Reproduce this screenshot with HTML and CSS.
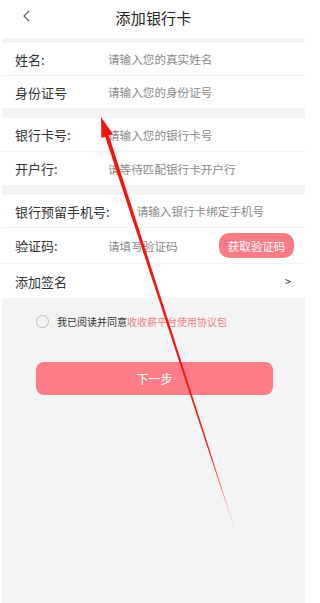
FILE: index.html
```html
<!DOCTYPE html>
<html lang="zh-CN">
<head>
<meta charset="utf-8">
<title>添加银行卡</title>
<link rel="stylesheet" href="styles.css">
</head>
<body>
<div class="page">
  <header class="topbar">
    <svg class="back" width="10" height="12" viewBox="0 0 10 12"><polyline points="7,1 2,6 7,11" fill="none" stroke="#555" stroke-width="1.1"/></svg>
    <h1 class="title">添加银行卡</h1>
  </header>
  <div class="gap gap-sm"></div>
  <section class="group">
    <div class="row"><span class="label">姓名:</span><span class="ph">请输入您的真实姓名</span></div>
    <div class="row"><span class="label">身份证号</span><span class="ph">请输入您的身份证号</span></div>
  </section>
  <div class="gap"></div>
  <section class="group">
    <div class="row r-tall"><span class="label">银行卡号:</span><span class="ph">请输入您的银行卡号</span></div>
    <div class="row r-tall"><span class="label">开户行:</span><span class="ph">请等待匹配银行卡开户行</span></div>
  </section>
  <div class="gap"></div>
  <section class="group">
    <div class="row"><span class="label wide">银行预留手机号:</span><span class="ph">请输入银行卡绑定手机号</span></div>
    <div class="row r-code"><span class="label">验证码:</span><span class="ph grow">请填写验证码</span><span class="code-btn">获取验证码</span></div>
    <div class="row r-sign"><span class="label grow">添加签名</span><span class="more">&gt;</span></div>
  </section>
  <div class="agree">
    <span class="radio"></span>
    <span class="agree-text">我已阅读并同意<span class="link">收收薪平台使用协议包</span></span>
  </div>
  <div class="next-wrap"><div class="next">下一步</div></div>
</div>
<svg class="arrow" width="308" height="603" viewBox="0 0 308 603">
  <defs>
    <linearGradient id="fade" gradientUnits="userSpaceOnUse" x1="107" y1="136" x2="236" y2="533">
      <stop offset="0" stop-color="#f2140f"/>
      <stop offset="0.78" stop-color="#f51a14"/>
      <stop offset="1" stop-color="#ff3a30" stop-opacity="0"/>
    </linearGradient>
  </defs>
  <polygon points="108.9,135.4 105.1,136.6 235.6,533 236.2,532.8" fill="url(#fade)"/>
  <polygon points="101,117 113,134.2 101.4,137.9" fill="#f2140f"/>
</svg>
</body>
</html>
```
FILE: styles.css
```css
html, body {
  margin: 0;
  padding: 0;
  background: #ffffff;
}
body {
  width: 308px;
  height: 603px;
  overflow: hidden;
  position: relative;
  font-family: "Noto Sans CJK SC", "Noto Sans", sans-serif;
  color: #333;
}
.page {
  margin-left: 2px;
  width: 303px;
  height: 603px;
  background: #f4f4f4;
  display: flex;
  flex-direction: column;
}
.topbar {
  height: 38px;
  background: #fff;
  display: flex;
  align-items: center;
  justify-content: center;
  position: relative;
}
.back {
  position: absolute;
  left: 20px;
  top: 10px;
}
.title {
  margin: 0 0 4px;
  font-size: 15px;
  font-weight: normal;
  color: #222;
  letter-spacing: 0.2px;
}
.gap { height: 10px; flex: none; }
.gap-sm { height: 5px; }
.group {
  background: #fff;
  display: flex;
  flex-direction: column;
}
.row {
  height: 32px;
  display: flex;
  align-items: center;
  padding: 0 13px;
  border-bottom: 1px solid #f1f1f1;
}
.row:last-child { border-bottom: none; }
.r-tall { height: 33px; }
.r-code { height: 35px; padding-right: 11px; }
.r-sign { height: 34px; }
.label {
  width: 93px;
  flex: none;
  font-size: 13px;
  color: #333;
}
.label.wide { width: auto; margin-right: 27px; }
.ph {
  font-size: 11.6px;
  color: #8a8a8a;
}
.grow { flex: 1; }
.code-btn {
  width: 75px;
  height: 25px;
  border-radius: 10px;
  background: #fb7b86;
  color: #fff;
  font-size: 11.5px;
  display: flex;
  align-items: center;
  justify-content: center;
}
.more {
  font-size: 11px;
  color: #333;
  margin-right: 1px;
}
.agree {
  display: flex;
  align-items: center;
  padding: 16px 0 0 34px;
  height: 14px;
}
.radio {
  width: 11px;
  height: 11px;
  border: 1px solid #bdbdbd;
  border-radius: 50%;
  margin-right: 8px;
}
.agree-text {
  font-size: 10px;
  color: #333;
}
.link { color: #f07e8a; }
.next-wrap {
  padding: 34px 32px 0 34px;
}
.next {
  height: 33px;
  border-radius: 8px;
  background: #ff7d88;
  color: #fff;
  font-size: 12px;
  display: flex;
  align-items: center;
  justify-content: center;
}
.arrow {
  position: absolute;
  left: 0;
  top: 0;
  pointer-events: none;
}
```
